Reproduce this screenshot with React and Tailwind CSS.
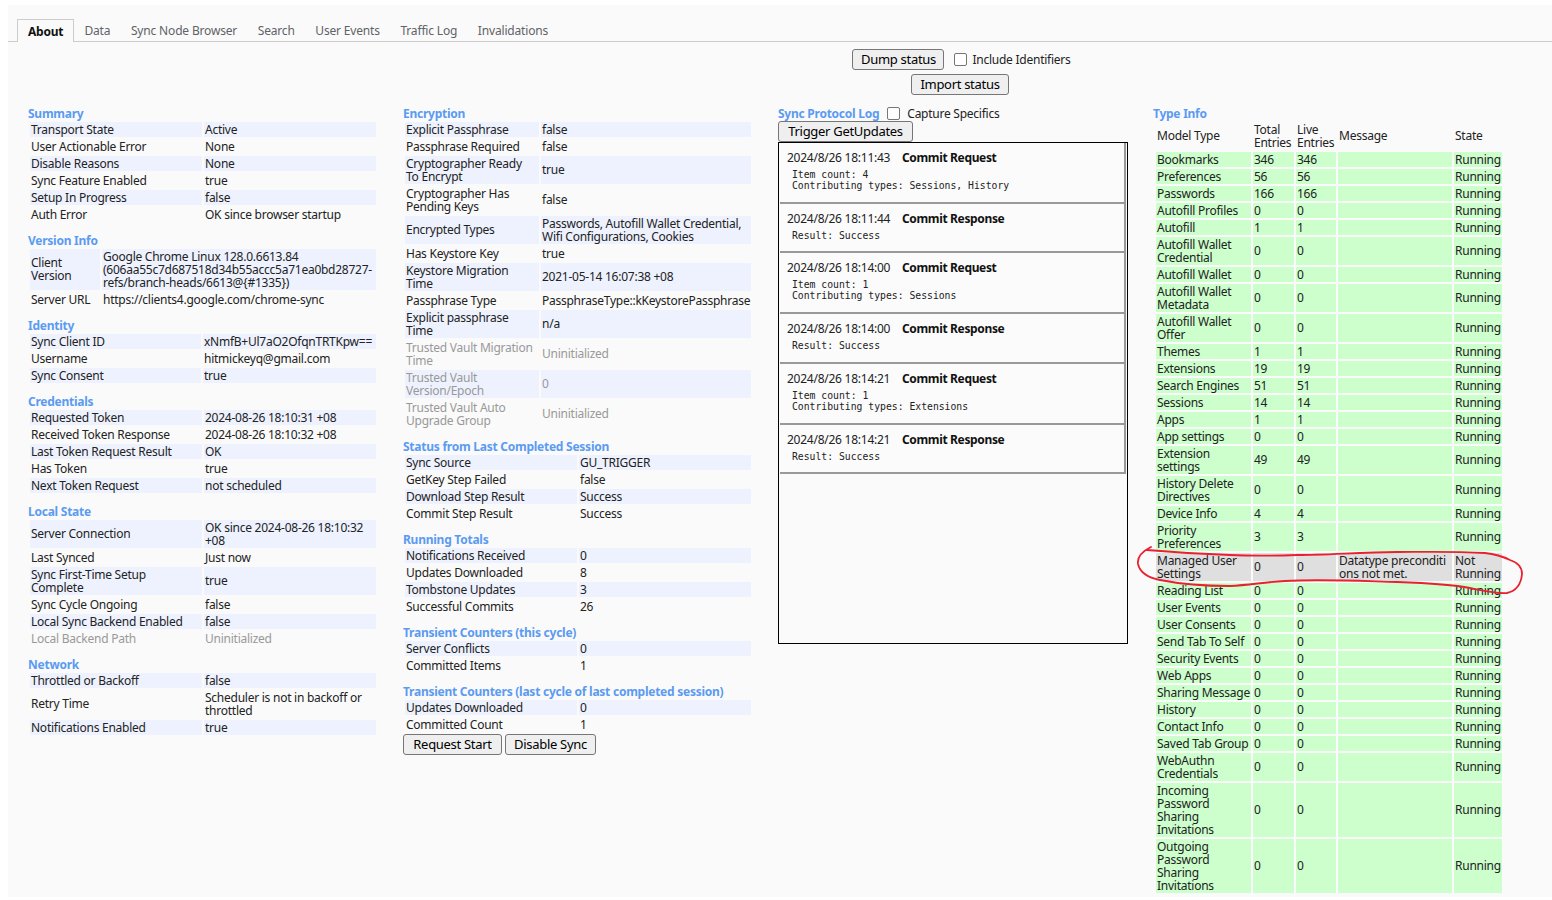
const FONT = "font-['Noto_Sans',sans-serif]";

const nl = (s) => String(s).split("\n").length;
const cellCls = (text, row) => {
  const diff = Math.max(...row.map(nl)) - nl(text);
  return `p-px whitespace-pre align-middle ${diff % 2 === 1 ? "pb-[2px]" : ""}`;
};

function Section({ title, widths, rows, className = "" }) {
  return (
    <section className={className}>
      <h2 className="h-[13px] text-[12px] leading-[13px] font-bold text-[#5b9bf2]">{title}</h2>
      <table className="table-fixed w-[350px] border-separate border-spacing-[2px]">
        <colgroup>
          {widths.map((w, i) => (
            <col key={i} style={{ width: w }} />
          ))}
        </colgroup>
        <tbody>
          {rows.map((r, i) => (
            <tr key={i} className={`odd:bg-[#eef2fe] ${r[2] ? "text-[#999]" : "text-[#222]"}`}>
              <td className={cellCls(r[0], r.slice(0, 2))}>{r[0]}</td>
              <td className={cellCls(r[1], r.slice(0, 2))}>{r[1]}</td>
            </tr>
          ))}
        </tbody>
      </table>
    </section>
  );
}

const L = [172, 172];
const M = [172, 172];

const col1 = [
  ["Summary", L, [["Transport State", "Active"], ["User Actionable Error", "None"], ["Disable Reasons", "None"], ["Sync Feature Enabled", "true"], ["Setup In Progress", "false"], ["Auth Error", "OK since browser startup"]]],
  ["Version Info", [70, 274], [["Client\nVersion", "Google Chrome Linux 128.0.6613.84\n(606aa55c7d687518d34b55accc5a71ea0bd28727-\nrefs/branch-heads/6613@{#1335})"], ["Server URL", "https://clients4.google.com/chrome-sync"]]],
  ["Identity", [171, 173], [["Sync Client ID", "xNmfB+Ul7aO2OfqnTRTKpw=="], ["Username", "hitmickeyq@gmail.com"], ["Sync Consent", "true"]]],
  ["Credentials", L, [["Requested Token", "2024-08-26 18:10:31 +08"], ["Received Token Response", "2024-08-26 18:10:32 +08"], ["Last Token Request Result", "OK"], ["Has Token", "true"], ["Next Token Request", "not scheduled"]]],
  ["Local State", L, [["Server Connection", "OK since 2024-08-26 18:10:32\n+08"], ["Last Synced", "Just now"], ["Sync First-Time Setup\nComplete", "true"], ["Sync Cycle Ongoing", "false"], ["Local Sync Backend Enabled", "false"], ["Local Backend Path", "Uninitialized", true]]],
  ["Network", L, [["Throttled or Backoff", "false"], ["Retry Time", "Scheduler is not in backoff or\nthrottled"], ["Notifications Enabled", "true"]]],
];

const col2 = [
  ["Encryption", [134, 210], [["Explicit Passphrase", "false"], ["Passphrase Required", "false"], ["Cryptographer Ready\nTo Encrypt", "true"], ["Cryptographer Has\nPending Keys", "false"], ["Encrypted Types", "Passwords, Autofill Wallet Credential,\nWifi Configurations, Cookies"], ["Has Keystore Key", "true"], ["Keystore Migration\nTime", "2021-05-14 16:07:38 +08"], ["Passphrase Type", "PassphraseType::kKeystorePassphrase"], ["Explicit passphrase\nTime", "n/a"], ["Trusted Vault Migration\nTime", "Uninitialized", true], ["Trusted Vault\nVersion/Epoch", "0", true], ["Trusted Vault Auto\nUpgrade Group", "Uninitialized", true]]],
  ["Status from Last Completed Session", M, [["Sync Source", "GU_TRIGGER"], ["GetKey Step Failed", "false"], ["Download Step Result", "Success"], ["Commit Step Result", "Success"]]],
  ["Running Totals", M, [["Notifications Received", "0"], ["Updates Downloaded", "8"], ["Tombstone Updates", "3"], ["Successful Commits", "26"]]],
  ["Transient Counters (this cycle)", M, [["Server Conflicts", "0"], ["Committed Items", "1"]]],
  ["Transient Counters (last cycle of last completed session)", M, [["Updates Downloaded", "0"], ["Committed Count", "1"]]],
];

const log = [
  ["2024/8/26 18:11:43", "Commit Request", "Item count: 4\nContributing types: Sessions, History", "h-[61px]"],
  ["2024/8/26 18:11:44", "Commit Response", "Result: Success", "h-[49px]"],
  ["2024/8/26 18:14:00", "Commit Request", "Item count: 1\nContributing types: Sessions", "h-[61px]"],
  ["2024/8/26 18:14:00", "Commit Response", "Result: Success", "h-[50px]"],
  ["2024/8/26 18:14:21", "Commit Request", "Item count: 1\nContributing types: Extensions", "h-[61px]"],
  ["2024/8/26 18:14:21", "Commit Response", "Result: Success", "h-[49px]"],
];

const types = [
  ["Bookmarks", "346", "346"], ["Preferences", "56", "56"], ["Passwords", "166", "166"], ["Autofill Profiles", "0", "0"], ["Autofill", "1", "1"],
  ["Autofill Wallet\nCredential", "0", "0"], ["Autofill Wallet", "0", "0"], ["Autofill Wallet\nMetadata", "0", "0"], ["Autofill Wallet\nOffer", "0", "0"],
  ["Themes", "1", "1"], ["Extensions", "19", "19"], ["Search Engines", "51", "51"], ["Sessions", "14", "14"], ["Apps", "1", "1"], ["App settings", "0", "0"],
  ["Extension\nsettings", "49", "49"], ["History Delete\nDirectives", "0", "0"], ["Device Info", "4", "4"], ["Priority\nPreferences", "3", "3"],
  ["Managed User\nSettings", "0", "0", "Datatype preconditi\nons not met.", "Not\nRunning"],
  ["Reading List", "0", "0"], ["User Events", "0", "0"], ["User Consents", "0", "0"], ["Send Tab To Self", "0", "0"], ["Security Events", "0", "0"],
  ["Web Apps", "0", "0"], ["Sharing Message", "0", "0"], ["History", "0", "0"], ["Contact Info", "0", "0"], ["Saved Tab Group", "0", "0"],
  ["WebAuthn\nCredentials", "0", "0"], ["Incoming\nPassword\nSharing\nInvitations", "0", "0"], ["Outgoing\nPassword\nSharing\nInvitations", "0", "0"],
];

const tabs = ["Data", "Sync Node Browser", "Search", "User Events", "Traffic Log", "Invalidations"];
const headers = ["Model Type", "Total\nEntries", "Live\nEntries", "Message", "State"];

function Btn({ children, className = "" }) {
  return (
    <button className={`h-[21px] px-[6px] rounded-[3px] border border-[#767676] bg-[#efefef] text-[13px] leading-[17px] text-black tracking-[-0.3px] whitespace-nowrap ${className}`}>
      {children}
    </button>
  );
}

function Check({ className = "" }) {
  return <span className={`inline-block w-[13px] h-[13px] rounded-[2px] border border-[#767676] bg-white ${className}`} />;
}

export default function App() {
  return (
    <div className={`relative w-[1552px] h-[900px] overflow-hidden bg-white pt-[5px] pl-2 text-[12px] leading-[13px] tracking-[-0.25px] text-[#222] ${FONT}`}>
      <div className="h-[892px] bg-[#fafafa]">
        <nav className="flex items-end h-[37px] pl-[9px] border-b border-[#ccc]">
          <div className="h-[23px] -mb-px px-[10px] pt-[5px] border border-b-0 border-[#ccc] bg-[#fafafa] text-[#111] font-bold">About</div>
          {tabs.map((t) => (
            <div key={t} className="h-[22px] px-[10.3px] pt-[5px] tracking-[-0.17px] text-[#5f6368]">{t}</div>
          ))}
        </nav>

        <div className="flex flex-col items-center gap-[4px] pt-[7px] pl-[360px]">
          <div className="flex items-center pl-[3px]">
            <Btn className="w-[92px]">Dump status</Btn>
            <Check className="ml-[10px]" />
            <span className="ml-[5px]">Include Identifiers</span>
          </div>
          <Btn className="w-[98px]">Import status</Btn>
        </div>

        <div className="flex gap-[25px] pl-5 pt-[12px]">
          <div className="w-[350px] flex flex-col gap-[10px]">
            {col1.map(([t, w, r]) => (
              <Section key={t} title={t} widths={w} rows={r} />
            ))}
          </div>

          <div className="w-[350px] flex flex-col gap-[10px]">
            {col2.map(([t, w, r]) => (
              <Section key={t} title={t} widths={w} rows={r} />
            ))}
            <div className="flex gap-[3px] -mt-[10px]">
              <Btn className="w-[99px]">Request Start</Btn>
              <Btn className="w-[91px]">Disable Sync</Btn>
            </div>
          </div>

          <div className="w-[350px]">
            <div className="flex items-center h-[15px] -mt-px">
              <h2 className="text-[12px] leading-[13px] font-bold text-[#5b9bf2]">Sync Protocol Log</h2>
              <Check className="ml-[8px]" />
              <span className="ml-[7px]">Capture Specifics</span>
            </div>
            <Btn className="block w-[135px]">Trigger GetUpdates</Btn>
            <div className="h-[502px] border border-black pl-px pr-px">
              {log.map(([time, kind, body, h], i) => (
                <div key={i} className={`${h} pt-[8px] pl-[7px] border-r-2 border-b-2 border-[#999] bg-[#fbfbfb]`}>
                  <div className="flex h-[13px]">
                    <span className="w-[115px]">{time}</span>
                    <b className="font-bold tracking-[-0.35px] text-[#111]">{kind}</b>
                  </div>
                  <pre className="mt-[5px] ml-[5px] font-['DejaVu_Sans_Mono',monospace] text-[9.75px] leading-[11px] tracking-normal text-[#222]">{body}</pre>
                </div>
              ))}
            </div>
          </div>

          <div className="w-[350px]">
            <h2 className="h-[13px] text-[12px] leading-[13px] font-bold text-[#5b9bf2]">Type Info</h2>
            <table className="ml-px table-fixed w-[350px] border-separate border-spacing-[2px]">
              <colgroup>
                <col className="w-[95px]" />
                <col className="w-[41px]" />
                <col className="w-[40px]" />
                <col className="w-[114px]" />
                <col className="w-[48px]" />
              </colgroup>
              <thead>
                <tr>
                  {headers.map((h) => (
                    <th key={h} className={`${cellCls(h, headers)} font-normal text-left`}>{h}</th>
                  ))}
                </tr>
              </thead>
              <tbody>
                {types.map((r) => {
                  const cells = [r[0], r[1], r[2], r[3] || "", r[4] || "Running"];
                  return (
                    <tr key={r[0]} className={r[3] ? "bg-[#dfdfdf]" : "bg-[#ccffcc]"}>
                      {cells.map((c, i) => (
                        <td key={i} className={cellCls(c, cells)}>{c}</td>
                      ))}
                    </tr>
                  );
                })}
              </tbody>
            </table>
          </div>
        </div>
      </div>

      <svg className="absolute top-0 left-0 w-[1552px] h-[900px] pointer-events-none" viewBox="0 0 1552 900" fill="none">
        <path
          d="M1151 547 C1143 551 1137 557 1138 564 C1140 573 1150 578 1160 580 C1180 584 1205 586 1230 586 C1250 585 1265 582 1285 581 C1320 579 1360 581 1397 582 C1425 583 1450 584 1470 588 C1485 591 1498 594 1507 593 C1516 591 1521 585 1522 574 C1522 566 1516 562 1510 560 C1502 556 1495 554 1485 553 C1450 551 1420 552 1397 552 C1360 552 1330 555 1297 555 C1270 556 1250 556 1230 555 C1200 554 1170 552 1147 550"
          stroke="#e9202f"
          strokeWidth="1.8"
          strokeLinecap="round"
        />
      </svg>
    </div>
  );
}
